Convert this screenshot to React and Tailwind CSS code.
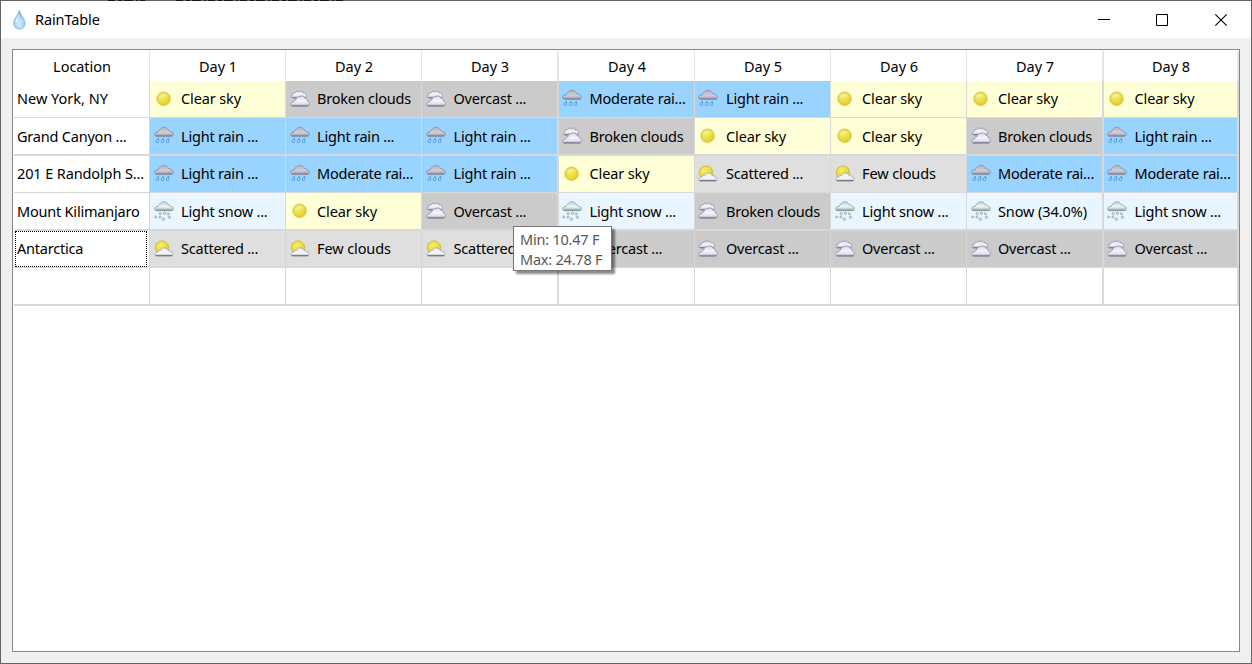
import React from "react";

const COLUMNS = ["Day 1", "Day 2", "Day 3", "Day 4", "Day 5", "Day 6", "Day 7", "Day 8"];

const ROWS = [
  ["New York, NY", ["sun", "Clear sky"], ["cloud", "Broken clouds"], ["cloud", "Overcast ..."], ["rain", "Moderate rai..."], ["rain", "Light rain ..."], ["sun", "Clear sky"], ["sun", "Clear sky"], ["sun", "Clear sky"]],
  ["Grand Canyon ...", ["rain", "Light rain ..."], ["rain", "Light rain ..."], ["rain", "Light rain ..."], ["cloud", "Broken clouds"], ["sun", "Clear sky"], ["sun", "Clear sky"], ["cloud", "Broken clouds"], ["rain", "Light rain ..."]],
  ["201 E Randolph S...", ["rain", "Light rain ..."], ["rain", "Moderate rai..."], ["rain", "Light rain ..."], ["sun", "Clear sky"], ["few", "Scattered ..."], ["few", "Few clouds"], ["rain", "Moderate rai..."], ["rain", "Moderate rai..."]],
  ["Mount Kilimanjaro", ["snow", "Light snow ..."], ["sun", "Clear sky"], ["cloud", "Overcast ..."], ["snow", "Light snow ..."], ["cloud", "Broken clouds"], ["snow", "Light snow ..."], ["snow", "Snow (34.0%)"], ["snow", "Light snow ..."]],
  ["Antarctica", ["few", "Scattered ..."], ["few", "Few clouds"], ["few", "Scattered ..."], ["cloud", "Overcast ..."], ["cloud", "Overcast ..."], ["cloud", "Overcast ..."], ["cloud", "Overcast ..."], ["cloud", "Overcast ..."]],
  ["", null, null, null, null, null, null, null, null],
];

const FILL = { sun: "bg-[#ffffd7]", cloud: "bg-[#cbcbcb]", rain: "bg-[#99d3ff]", few: "bg-[#dfdfdf]", snow: "bg-[#e9f6ff]" };

const TRACK = {
  "New York, NY": "tracking-[0px]",
  "201 E Randolph S...": "tracking-[-0.12px]",
  "Clear sky": "tracking-[-0.12px]",
  "Few clouds": "tracking-[-0.1px]",
  "Snow (34.0%)": "tracking-[-0.1px]",
  "Broken clouds": "tracking-[-0.23px]",
};
const track = (text) => TRACK[text] || "tracking-[-0.21px]";

const CELL_W = ["w-[136px]", "w-[136px]", "w-[136px]", "w-[137px]", "w-[136px]", "w-[136px]", "w-[136px]", "w-[137px]", "w-[135px]"];
const CELL_B = ["border-r", "border-r", "border-r", "border-r-2", "border-r", "border-r", "border-r", "border-r-2", "border-r-2"];
const CELL_P = ["pl-[3px]", "pl-1", "pl-1", "pl-1", "pl-[3px]", "pl-[3px]", "pl-1", "pl-1", "pl-[3px]"];
const GAP = ["", "gap-[7px]", "gap-[7px]", "gap-[7.5px]", "gap-[7.5px]", "gap-[8px]", "gap-[7px]", "gap-[7px]", "gap-[7.5px]"];

function Defs() {
  return (
    <svg className="absolute size-0">
      <defs>
        <linearGradient id="gc" x1="0" y1="0" x2="0" y2="1"><stop offset="0" stopColor="#d6d6e2" /><stop offset=".45" stopColor="#f4f4fb" /><stop offset=".75" stopColor="#e2e2ee" /><stop offset="1" stopColor="#a5a5bc" /></linearGradient>
        <linearGradient id="gr" x1="0" y1="0" x2="0" y2="1"><stop offset="0" stopColor="#b0b0bf" /><stop offset=".55" stopColor="#d0d0db" /><stop offset="1" stopColor="#9c9cb0" /></linearGradient>
        <linearGradient id="gn" x1="0" y1="0" x2="0" y2="1"><stop offset="0" stopColor="#c4d6d6" /><stop offset=".55" stopColor="#edf5f5" /><stop offset="1" stopColor="#9db5b3" /></linearGradient>
        <radialGradient id="gs" cx=".38" cy=".32" r=".75"><stop offset="0" stopColor="#f3ec72" /><stop offset=".6" stopColor="#eadd38" /><stop offset="1" stopColor="#d8c828" /></radialGradient>
        <radialGradient id="gd" cx=".5" cy=".7" r=".6"><stop offset="0" stopColor="#d5effd" /><stop offset=".6" stopColor="#a5d4f2" /><stop offset="1" stopColor="#74aede" /></radialGradient>
      </defs>
    </svg>
  );
}

const CLOUD = "M2.8 11.2C.9 11.2.3 9.8.7 8.6 1.1 7.4 2.6 6.8 4.3 7 4.6 5.4 5.2 4.6 6.2 4.4 7 2.9 8.7 2.2 10.5 2.4 12.6 2.6 13.7 4 14 5.4 15.4 5.2 16.4 6 16.8 7 18.6 7 19.5 8 19.4 9.2 19.3 10.4 18.3 11.2 17 11.2Z";

function WeatherIcon({ kind }) {
  return (
    <svg className="size-5 shrink-0" viewBox="0 0 20 20">
      {kind === "sun" && (
        <g>
          <circle cx="9.6" cy="9.8" r="7.8" fill="#e8dc70" opacity=".4" />
          <circle cx="9.6" cy="9.8" r="6.4" fill="url(#gs)" stroke="#d2c44a" strokeWidth="1" />
          <path d="M4.6 9.6C4.6 6.8 6.8 4.8 9.4 4.8S13.7 6 14 8C11 7.4 8 8 4.6 9.6Z" fill="#fbf7b5" opacity=".45" />
        </g>
      )}
      {kind === "rain" && (
        <g>
          <path d={CLOUD} fill="url(#gr)" stroke="#8e8ea3" strokeWidth=".9" transform="translate(0 -1)" />
          <path d="M1.6 9.9H18.4" stroke="#80809a" strokeWidth="1" />
          <g fill="#a8dcfa" stroke="#4499dc" strokeWidth=".9">
            <path d="M4.2 12.2L2.1 14.8A1.3 1.3 0 1 0 4.6 15.4Z" />
            <path d="M9.3 12.2L7.2 14.8A1.3 1.3 0 1 0 9.7 15.4Z" />
            <path d="M14.4 12.2L12.3 14.8A1.3 1.3 0 1 0 14.8 15.4Z" />
          </g>
        </g>
      )}
      {kind === "snow" && (
        <g>
          <path d={CLOUD} fill="url(#gn)" stroke="#91aaa8" strokeWidth=".9" transform="translate(0 -1.6)" />
          <path d="M1.6 9.3H18.4" stroke="#829d99" strokeWidth="1.3" />
          <g fill="#dcebea" stroke="#93afad" strokeWidth=".95">
            <circle cx="6.2" cy="12.6" r="1.1" /><circle cx="10.5" cy="12.2" r="1.2" /><circle cx="14.4" cy="12.8" r="1" />
            <circle cx="1.7" cy="16" r="1" /><circle cx="9.4" cy="18.2" r="1.3" /><circle cx="5.9" cy="16.2" r="1" /><circle cx="15.4" cy="16.2" r="1.2" />
          </g>
        </g>
      )}
      {kind === "cloud" && (
        <g strokeWidth=".8">
          <path d="M2 8.8C.6 8.4.6 6.3 2.6 6 2.6 4.2 3.6 3.6 5 3.8 5.6 2.4 7.6 1.6 9.2 2.4 11 1.6 12.6 2.4 13 3.8 15 3.6 16.6 4.6 16.4 6.4 17.2 7.6 16.4 8.8 15 8.8Z" fill="url(#gc)" stroke="#9090a6" />
          <path d="M2.6 8.8H7" stroke="#77778f" strokeWidth="1.1" />
          <path d="M2.6 17.2C1 17.1.4 15.9.7 14.6 1 13.4 2.2 12.9 3.6 13.1 3.8 11.4 4.6 10.9 5.8 11 6 8.8 7.6 7.4 9.8 7.5 11.4 6.4 14.4 6.8 15 9.4 16.4 9.4 17.2 10.4 17.3 12 18.8 12.2 19.6 13.4 19.4 14.9 19.2 16.4 18.3 17.2 17 17.2Z" fill="url(#gc)" stroke="#9090a8" />
          <path d="M1.8 16.8H18.2" stroke="#80809a" strokeWidth="1.1" />
        </g>
      )}
      {kind === "few" && (
        <g strokeWidth=".9">
          <circle cx="8" cy="8.6" r="7.6" fill="#d9cc66" opacity=".45" />
          <circle cx="8" cy="8.6" r="6.5" fill="url(#gs)" stroke="#cdb93a" />
          <path d="M2.8 17C1.2 17 .5 15.9.8 14.7 1.1 13.5 2.4 13 3.6 13.3 3.8 11.8 5.3 11.1 6.6 11.6 7.3 9.5 9 8.7 10.8 9 12.8 9.2 13.9 10.4 14.2 11.7 15.5 11.2 16.9 12 17.1 13.2 18.8 13.2 19.5 14.2 19.3 15.2 19.1 16.4 18.2 17 17 17Z" fill="#f1f1f8" stroke="#aaaabb" />
          <path d="M1.6 16.5H18.4" stroke="#777790" strokeWidth="1.4" />
        </g>
      )}
    </svg>
  );
}

export default function App() {
  return (
    <div className="flex h-[664px] w-[1252px] flex-col border border-[#636363] bg-[#f0f0f0] font-['Noto_Sans','Open_Sans',sans-serif] text-[14.5px] leading-5 text-black">
      <Defs />
      <svg className="absolute left-0 top-0 h-px w-[350px]" viewBox="0 0 350 1">
        <path d="M108 .5H145M176 .5H344" stroke="#1c1418" strokeDasharray="7 3 4 2 9 3 2 2" />
      </svg>
      <header className="flex h-[37px] shrink-0 items-center bg-white pl-2">
        <svg className="h-[22px] w-5" viewBox="0 0 20 22">
          <path d="M10.3 1.2C9.1 6 4.6 9.6 4.6 14.4A5.8 5.8 0 0 0 16.2 14.4C16.2 9.6 11.5 6 10.3 1.2Z" fill="url(#gd)" stroke="#95c1e3" strokeWidth=".9" />
          <path d="M10.2 4C9.2 8 6.3 10.8 6.3 13.8 8 15.4 9.8 10.5 10.2 4Z" fill="#fff" opacity=".7" />
        </svg>
        <h1 className="mb-0.5 ml-1.5 tracking-[-0.1px]">RainTable</h1>
        <div className="ml-auto flex items-center">
          <svg className="h-4 w-[58px]" viewBox="0 0 58 16"><path d="M23 7.5H35" stroke="#000" /></svg>
          <svg className="h-4 w-[58px]" viewBox="0 0 58 16"><path d="M23.5 2.5H34.5V13.5H23.5Z" stroke="#000" fill="none" /></svg>
          <svg className="h-4 w-[60px]" viewBox="0 0 60 16"><path d="M24.3 2.3L35.7 13.7M35.7 2.3L24.3 13.7" stroke="#000" strokeWidth="1.1" fill="none" /></svg>
        </div>
      </header>
      <main className="mx-[11px] mt-[11px] h-[603px] border border-[#828790] bg-white pl-px pt-px">
        <div className="flex h-[30px]">
          {["Location", ...COLUMNS].map((name, i) => (
            <div key={name} className={`${CELL_W[i]} ${CELL_B[i]} flex shrink-0 items-center justify-center border-[#e5e5e5] pb-px pl-px tracking-[-0.05px]`}>{name}</div>
          ))}
        </div>
        {ROWS.map((row, r) => {
          const lift = r % 2 ? "" : "mb-0.5";
          return (
            <div key={r} className={`flex border-[#d8d8d8] ${r % 2 ? "h-[38px] border-b-2" : "h-[37px] border-b"}`}>
              {row.map((cell, i) => (
                <div key={i} className={`${CELL_W[i]} ${CELL_B[i]} shrink-0 border-[#d8d8d8]`}>
                  {i === 0 ? (
                    <div className={`flex h-9 items-center whitespace-nowrap pl-[3px] ${r === 4 ? "relative" : ""}`}>
                      <span className={`${track(cell)} ${lift}`}>{cell}</span>
                      {r === 4 && <span className="absolute left-px top-0 h-9 w-[132px] border border-dotted border-black" />}
                    </div>
                  ) : (
                    <div className={`flex h-9 items-center whitespace-nowrap ${CELL_P[i]} ${GAP[i]} ${cell ? FILL[cell[0]] : ""}`}>
                      {cell && <WeatherIcon kind={cell[0]} />}
                      {cell && <span className={`${track(cell[1])} ${lift}`}>{cell[1]}</span>}
                    </div>
                  )}
                </div>
              ))}
            </div>
          );
        })}
      </main>
      <div className="absolute left-[513px] top-[226px] h-[45px] w-[99px] border border-[#767676] bg-white pl-1.5 pt-[2px] tracking-[-0.22px] text-[#575757] shadow-[3px_3px_2px_rgba(0,0,0,0.45)]">
        <p>Min: 10.47 F</p>
        <p>Max: 24.78 F</p>
      </div>
    </div>
  );
}
